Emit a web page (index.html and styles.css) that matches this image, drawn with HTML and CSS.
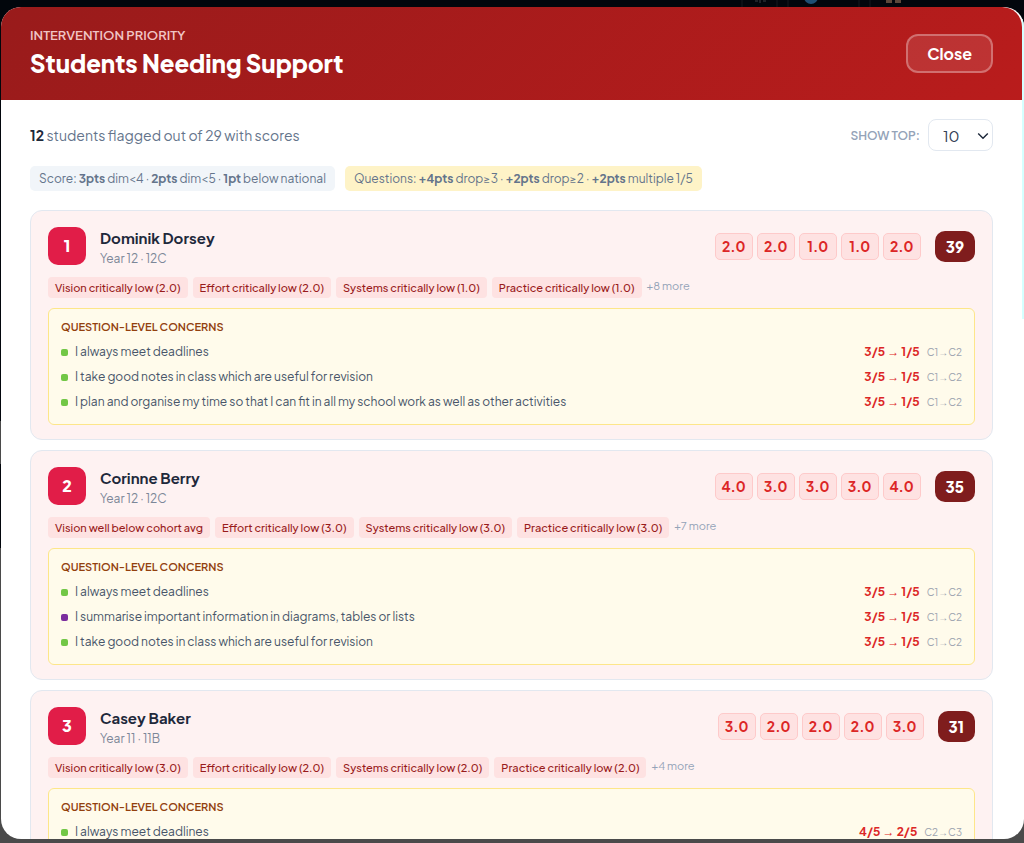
FILE: index.html
```
<!DOCTYPE html>
<html lang="en">
<head>
  <meta charset="UTF-8">
  <meta name="viewport" content="width=device-width, initial-scale=1.0">
  <title>Students Needing Support</title>
  <link rel="stylesheet" href="styles.css">
</head>
<body>
  <div class="overlay">
    <!-- Dimmed page icons behind the dialog -->
    <svg class="page-icons" viewBox="0 0 180 7" aria-hidden="true">
      <path d="M2 0v7M37 0v7M48 0v7M119 0v7M130 0v7" stroke="#14191f"/>
      <path d="M15 1h3M20 0v3M23 1h3" stroke="#3a3f45"/>
      <circle cx="71" cy="-3" r="7" fill="#1f4f73"/>
      <path d="M146 0h6v3h-6zM155 0h6v3h-6z" fill="#5c483b"/>
    </svg>

    <div class="modal" role="dialog" aria-labelledby="modalTitle">
      <header class="modal-header">
        <div>
          <p class="eyebrow">INTERVENTION PRIORITY</p>
          <h1 id="modalTitle">Students Needing Support</h1>
        </div>
        <button type="button" class="btn-close">Close</button>
      </header>

      <div class="modal-body">
        <div class="toolbar">
          <p class="summary"><strong>12</strong> students flagged out of 29 with scores</p>
          <div class="show-top">
            <label for="showTop">SHOW TOP:</label>
            <div class="select-wrap">
              <select id="showTop">
                <option>5</option>
                <option selected>10</option>
                <option>20</option>
              </select>
              <svg class="chevron" viewBox="0 0 12 8" aria-hidden="true"><path d="M1.2 1.4 6 6.2l4.8-4.8"/></svg>
            </div>
          </div>
        </div>

        <div class="legend">
          <span class="legend-item">Score: <b>3pts</b> dim&lt;4 · <b>2pts</b> dim&lt;5 · <b>1pt</b> below national</span>
          <span class="legend-item legend-questions">Questions: <b>+4pts</b> drop≥3 · <b>+2pts</b> drop≥2 · <b>+2pts</b> multiple 1/5</span>
        </div>

        <div class="students">
          <!-- Student 1 -->
          <article class="student">
            <div class="student-head">
              <div class="rank">1</div>
              <div class="student-info">
                <h2>Dominik Dorsey</h2>
                <p>Year 12 · 12C</p>
              </div>
              <div class="scores"><span>2.0</span><span>2.0</span><span>1.0</span><span>1.0</span><span>2.0</span><strong class="total">39</strong></div>
            </div>
            <div class="reasons">
              <span class="tag">Vision critically low (2.0)</span>
              <span class="tag">Effort critically low (2.0)</span>
              <span class="tag">Systems critically low (1.0)</span>
              <span class="tag">Practice critically low (1.0)</span>
              <span class="more">+8 more</span>
            </div>
            <section class="concerns">
              <h3>QUESTION-LEVEL CONCERNS</h3>
              <ul>
                <li><i class="dot"></i><span class="question">I always meet deadlines</span><b class="change">3/5 <span class="arrow">→</span> 1/5</b><span class="cycle">C1<span class="arrow">→</span>C2</span></li>
                <li><i class="dot"></i><span class="question">I take good notes in class which are useful for revision</span><b class="change">3/5 <span class="arrow">→</span> 1/5</b><span class="cycle">C1<span class="arrow">→</span>C2</span></li>
                <li><i class="dot"></i><span class="question">I plan and organise my time so that I can fit in all my school work as well as other activities</span><b class="change">3/5 <span class="arrow">→</span> 1/5</b><span class="cycle">C1<span class="arrow">→</span>C2</span></li>
              </ul>
            </section>
          </article>

          <!-- Student 2 -->
          <article class="student">
            <div class="student-head">
              <div class="rank">2</div>
              <div class="student-info">
                <h2>Corinne Berry</h2>
                <p>Year 12 · 12C</p>
              </div>
              <div class="scores"><span>4.0</span><span>3.0</span><span>3.0</span><span>3.0</span><span>4.0</span><strong class="total">35</strong></div>
            </div>
            <div class="reasons">
              <span class="tag">Vision well below cohort avg</span>
              <span class="tag">Effort critically low (3.0)</span>
              <span class="tag">Systems critically low (3.0)</span>
              <span class="tag">Practice critically low (3.0)</span>
              <span class="more">+7 more</span>
            </div>
            <section class="concerns">
              <h3>QUESTION-LEVEL CONCERNS</h3>
              <ul>
                <li><i class="dot"></i><span class="question">I always meet deadlines</span><b class="change">3/5 <span class="arrow">→</span> 1/5</b><span class="cycle">C1<span class="arrow">→</span>C2</span></li>
                <li><i class="dot dot-purple"></i><span class="question">I summarise important information in diagrams, tables or lists</span><b class="change">3/5 <span class="arrow">→</span> 1/5</b><span class="cycle">C1<span class="arrow">→</span>C2</span></li>
                <li><i class="dot"></i><span class="question">I take good notes in class which are useful for revision</span><b class="change">3/5 <span class="arrow">→</span> 1/5</b><span class="cycle">C1<span class="arrow">→</span>C2</span></li>
              </ul>
            </section>
          </article>

          <!-- Student 3 -->
          <article class="student">
            <div class="student-head">
              <div class="rank">3</div>
              <div class="student-info">
                <h2>Casey Baker</h2>
                <p>Year 11 · 11B</p>
              </div>
              <div class="scores"><span>3.0</span><span>2.0</span><span>2.0</span><span>2.0</span><span>3.0</span><strong class="total">31</strong></div>
            </div>
            <div class="reasons">
              <span class="tag">Vision critically low (3.0)</span>
              <span class="tag">Effort critically low (2.0)</span>
              <span class="tag">Systems critically low (2.0)</span>
              <span class="tag">Practice critically low (2.0)</span>
              <span class="more">+4 more</span>
            </div>
            <section class="concerns">
              <h3>QUESTION-LEVEL CONCERNS</h3>
              <ul>
                <li><i class="dot"></i><span class="question">I always meet deadlines</span><b class="change">4/5 <span class="arrow">→</span> 2/5</b><span class="cycle">C2<span class="arrow">→</span>C3</span></li>
              </ul>
            </section>
          </article>
        </div>
      </div>
    </div>
  </div>
</body>
</html>
```

FILE: styles.css
```
* {
  box-sizing: border-box;
}
body, h1, h2, h3, p, ul {
  margin: 0;
  padding: 0;
}
body {
  font-family: "Plus Jakarta Sans", Inter, sans-serif;
  color: #1e293b;
  background: #02060c;
}
.overlay {
  position: relative;
  height: 100vh;
  padding: 7px 0 4px 1px;
  background: linear-gradient(#02060c 50%, #4a4a4a 50% 55%, #02060c 55% 65%, #4a4a4a 65%);
}
.page-icons {
  position: absolute;
  top: 0;
  right: 104px;
  width: 180px;
  height: 7px;
}
.modal {
  position: relative;
  height: 100%;
  display: flex;
  flex-direction: column;
  background: white;
  border-radius: 20px;
  overflow: hidden;
}
/* scroll thumb */
.modal::after {
  content: "";
  position: absolute;
  top: 12px;
  right: 0;
  width: 2px;
  height: 36%;
  background: #d5ffff;
}
.modal-header {
  display: flex;
  justify-content: space-between;
  align-items: center;
  flex-shrink: 0;
  margin-right: 2px;
  padding: 19px 29px;
  border-radius: 0 20px 0 0;
  background: linear-gradient(135deg, #991b1b, #b91c1c);
  color: white;
}
.eyebrow {
  font-size: 13px;
  line-height: 19px;
  font-weight: 600;
  color: #f0c4c4;
}
h1 {
  font-size: 24px;
  line-height: 36px;
  font-weight: 800;
}
.btn-close {
  height: 39px;
  padding: 0 19px;
  border: 2px solid rgba(255, 255, 255, 0.3);
  border-radius: 12px;
  background: rgba(255, 255, 255, 0.1);
  color: white;
  font-family: inherit;
  font-size: 16px;
  font-weight: 700;
}
.modal-body {
  flex: 1;
  min-height: 0;
  overflow: hidden;
  padding: 19px 31px 0 29px;
}
.toolbar {
  display: flex;
  justify-content: space-between;
  align-items: center;
  margin-bottom: 15px;
}
.summary {
  font-size: 14px;
  color: #64748b;
}
.summary strong {
  color: #1e293b;
}
.show-top {
  display: flex;
  align-items: center;
  gap: 8px;
}
.show-top label {
  font-size: 12px;
  font-weight: 600;
  color: #94a3b8;
}
.select-wrap {
  position: relative;
}
.select-wrap select {
  appearance: none;
  display: block;
  width: 65px;
  height: 32px;
  padding: 0 14px;
  border: 1px solid #e2e8f0;
  border-radius: 8px;
  background: white;
  color: #334155;
  font-family: inherit;
  font-size: 15px;
}
.chevron {
  position: absolute;
  top: 13px;
  right: 4px;
  width: 12px;
  height: 8px;
  fill: none;
  stroke: #1e293b;
  stroke-width: 1.4;
  pointer-events: none;
}
.legend {
  display: flex;
  gap: 10px;
  margin-bottom: 19px;
}
.legend-item {
  padding: 0 9px;
  border-radius: 5px;
  background: #f1f5f9;
  color: #64748b;
  font-size: 12px;
  line-height: 25px;
}
.legend-questions {
  background: #fef3c7;
}
.students {
  display: flex;
  flex-direction: column;
  gap: 10px;
}
.student {
  padding: 16px 17px 14px;
  border: 1px solid #e2e8f0;
  border-radius: 12px;
  background: #fef2f2;
}
.student-head {
  display: flex;
  align-items: flex-start;
  margin-bottom: 8px;
}
.rank {
  width: 38px;
  height: 38px;
  margin-right: 14px;
  border-radius: 10px;
  background: #e11d48;
  color: white;
  font-size: 16px;
  line-height: 38px;
  font-weight: 800;
  text-align: center;
}
.student-info {
  flex: 1;
}
.student-info h2 {
  font-size: 15px;
  line-height: 21px;
  font-weight: 700;
}
.student-info p {
  font-size: 12px;
  line-height: 21px;
  color: #7c8798;
}
.scores {
  display: flex;
  align-items: center;
  gap: 4px;
  height: 38px;
}
.scores span {
  width: 38px;
  border: 1px solid #fecaca;
  border-radius: 5px;
  background: #fee2e2;
  color: #dc2626;
  font-size: 14px;
  line-height: 25px;
  font-weight: 700;
  text-align: center;
}
.total {
  margin-left: 10px;
  padding: 0 11px;
  border-radius: 10px;
  background: #7f1d1d;
  color: white;
  font-size: 15px;
  line-height: 31px;
  font-weight: 800;
}
.reasons {
  display: flex;
  gap: 5px;
  margin-bottom: 10px;
}
.tag {
  padding: 0 7px;
  border-radius: 4px;
  background: #fee2e2;
  color: #991b1b;
  font-size: 11px;
  line-height: 21px;
  font-weight: 500;
}
.more {
  color: #94a3b8;
  font-size: 11px;
  line-height: 17px;
}
.concerns {
  padding: 10px 12px 12px;
  border: 1px solid #fde68a;
  border-radius: 6px;
  background: #fffbeb;
}
.concerns h3 {
  margin-bottom: 7px;
  color: #92400e;
  font-size: 11px;
  line-height: 16px;
  font-weight: 600;
}
.concerns ul {
  display: flex;
  flex-direction: column;
  gap: 5px;
  list-style: none;
}
.concerns li {
  display: flex;
  align-items: center;
  height: 20px;
  line-height: 20px;
}
.dot {
  width: 7px;
  height: 7px;
  margin-right: 7px;
  border-radius: 2px;
  background: #72c746;
}
.dot-purple {
  background: #7b2d9e;
}
.question {
  flex: 1;
  color: #475569;
  font-size: 12px;
}
.change {
  margin-right: 7px;
  color: #dc2626;
  font-size: 12px;
}
.cycle {
  color: #9ca3af;
  font-size: 10px;
}
.arrow {
  font-family: "Liberation Serif", serif;
  font-weight: 400;
}
```
